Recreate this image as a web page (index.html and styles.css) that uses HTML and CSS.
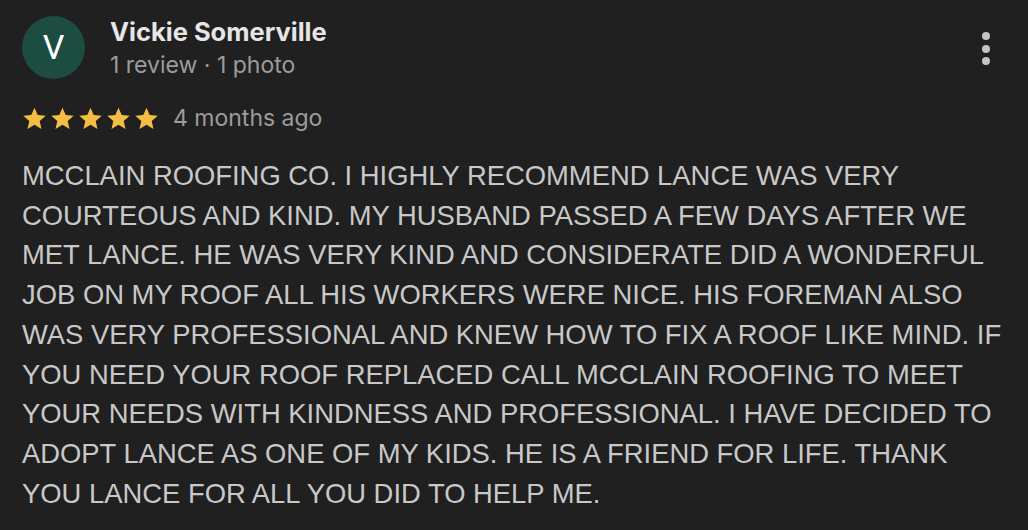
FILE: index.html
```html
<!DOCTYPE html>
<html lang="en">
<head>
<meta charset="utf-8">
<title>Review</title>
<link rel="stylesheet" href="styles.css">
</head>
<body>
<article class="review">
  <header class="review-head">
    <div class="avatar">V</div>
    <div class="author">
      <div class="author-name">Vickie Somerville</div>
      <div class="author-meta">1 review · 1 photo</div>
    </div>
    <button class="more" aria-label="More options">
      <span class="dot"></span><span class="dot"></span><span class="dot"></span>
    </button>
  </header>
  <div class="rating">
    <div class="stars">
      <svg class="star" viewBox="0 0 24 24"><path d="M12 1.6l3.1 7.1 7.7.7-5.8 5.1 1.7 7.6L12 18.1l-6.7 4 1.7-7.6-5.8-5.1 7.7-.7z"/></svg>
      <svg class="star" viewBox="0 0 24 24"><path d="M12 1.6l3.1 7.1 7.7.7-5.8 5.1 1.7 7.6L12 18.1l-6.7 4 1.7-7.6-5.8-5.1 7.7-.7z"/></svg>
      <svg class="star" viewBox="0 0 24 24"><path d="M12 1.6l3.1 7.1 7.7.7-5.8 5.1 1.7 7.6L12 18.1l-6.7 4 1.7-7.6-5.8-5.1 7.7-.7z"/></svg>
      <svg class="star" viewBox="0 0 24 24"><path d="M12 1.6l3.1 7.1 7.7.7-5.8 5.1 1.7 7.6L12 18.1l-6.7 4 1.7-7.6-5.8-5.1 7.7-.7z"/></svg>
      <svg class="star" viewBox="0 0 24 24"><path d="M12 1.6l3.1 7.1 7.7.7-5.8 5.1 1.7 7.6L12 18.1l-6.7 4 1.7-7.6-5.8-5.1 7.7-.7z"/></svg>
    </div>
    <span class="when">4 months ago</span>
  </div>
  <p class="review-text">MCCLAIN ROOFING CO. I HIGHLY RECOMMEND LANCE WAS VERY COURTEOUS AND KIND. MY HUSBAND PASSED A FEW DAYS AFTER WE MET LANCE. HE WAS VERY KIND AND CONSIDERATE DID A WONDERFUL JOB ON MY ROOF ALL HIS WORKERS WERE NICE. HIS FOREMAN ALSO WAS VERY PROFESSIONAL AND KNEW HOW TO FIX A ROOF LIKE MIND. IF YOU NEED YOUR ROOF REPLACED CALL MCCLAIN ROOFING TO MEET YOUR NEEDS WITH KINDNESS AND PROFESSIONAL. I HAVE DECIDED TO ADOPT LANCE AS ONE OF MY KIDS. HE IS A FRIEND FOR LIFE. THANK YOU LANCE FOR ALL YOU DID TO HELP ME.</p>
</article>
</body>
</html>
```

FILE: styles.css
```css
html, body {
  margin: 0;
  padding: 0;
  background: #202020;
}

body {
  width: 1028px;
  height: 530px;
  overflow: hidden;
}

.review {
  padding: 16px 22px 0 22px;
}

.review-head {
  display: flex;
  align-items: flex-start;
}

.avatar {
  width: 63px;
  height: 63px;
  border-radius: 50%;
  background: #1d4c40;
  color: #ffffff;
  font-family: Roboto, "Liberation Sans", sans-serif;
  font-size: 34px;
  line-height: 63px;
  text-align: center;
  flex: none;
}

.author {
  margin-left: 25px;
  flex: 1;
}

.author-name {
  font-family: Inter, Roboto, sans-serif;
  font-weight: 700;
  font-size: 25.5px;
  line-height: 32px;
  color: #e6e6e6;
}

.author-meta {
  font-family: Inter, Roboto, sans-serif;
  font-size: 23px;
  line-height: 34px;
  color: #9c9c9c;
}

.more {
  background: none;
  border: 0;
  padding: 0;
  margin: 16px 16px 0 0;
  display: flex;
  flex-direction: column;
  gap: 4.5px;
}

.dot {
  width: 8px;
  height: 8px;
  border-radius: 50%;
  background: #c4c4c4;
  display: block;
}

.rating {
  display: flex;
  align-items: center;
  margin-top: 22px;
}

.stars {
  display: flex;
  gap: 3px;
}

.star {
  width: 25px;
  height: 25px;
  fill: #f4be42;
  display: block;
}

.when {
  margin-left: 14px;
  font-family: Inter, Roboto, sans-serif;
  font-size: 23px;
  color: #9c9c9c;
}

.review-text {
  margin: 24px 0 0 0;
  font-family: "Liberation Sans", Arial, sans-serif;
  font-size: 27.4px;
  line-height: 39.7px;
  color: #c8c8c8;
  width: 988px;
}
```
